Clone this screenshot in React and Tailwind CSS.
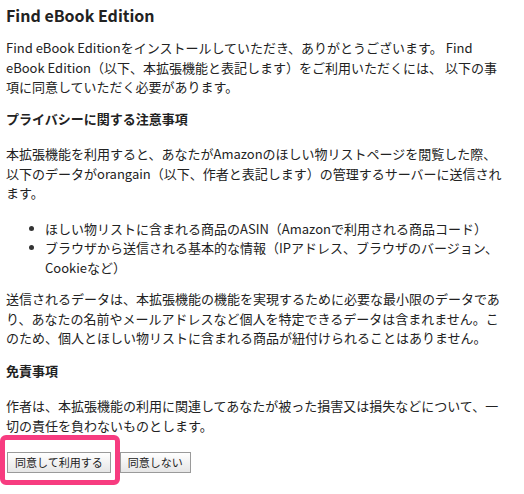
import React from 'react';

const Line = ({ children }) => <span className="block whitespace-nowrap">{children}</span>;

const Bullet = ({ children }) => (
  <li className="flex">
    <span className="w-[39px] shrink-0 flex items-center justify-end pr-[11px] h-[19.5px]">
      <span className="block w-[5px] h-[5px] rounded-full bg-[#333]" />
    </span>
    <span>{children}</span>
  </li>
);

const App = () => (
  <div className="w-[524px] h-[494px] bg-white px-[6px] pt-[5px] text-[#222] font-['Noto_Sans_CJK_JP',sans-serif] text-[13px] leading-[19.5px]">
    <h1 className="text-[16px] font-bold leading-[20px]">Find eBook Edition</h1>

    <p className="mt-[13px]">
      <Line>Find eBook Editionをインストールしていただき、ありがとうございます。 Find</Line>
      <Line>eBook Edition（以下、本拡張機能と表記します）をご利用いただくには、 以下の事</Line>
      <Line>項に同意していただく必要があります。</Line>
    </p>

    <h2 className="mt-[12px] font-bold">プライバシーに関する注意事項</h2>

    <p className="mt-[16px]">
      <Line>本拡張機能を利用すると、あなたがAmazonのほしい物リストページを閲覧した際、</Line>
      <Line>以下のデータがorangain（以下、作者と表記します）の管理するサーバーに送信され</Line>
      <Line>ます。</Line>
    </p>

    <ul className="mt-[16px]">
      <Bullet>
        <Line>ほしい物リストに含まれる商品のASIN（Amazonで利用される商品コード）</Line>
      </Bullet>
      <Bullet>
        <Line>ブラウザから送信される基本的な情報（IPアドレス、ブラウザのバージョン、</Line>
        <Line>Cookieなど）</Line>
      </Bullet>
    </ul>

    <p className="mt-[12px]">
      <Line>送信されるデータは、本拡張機能の機能を実現するために必要な最小限のデータであ</Line>
      <Line>り、あなたの名前やメールアドレスなど個人を特定できるデータは含まれません。こ</Line>
      <Line>のため、個人とほしい物リストに含まれる商品が紐付けられることはありません。</Line>
    </p>

    <h2 className="mt-[13.5px] font-bold">免責事項</h2>

    <p className="mt-[15.5px]">
      <Line>作者は、本拡張機能の利用に関連してあなたが被った損害又は損失などについて、一</Line>
      <Line>切の責任を負わないものとします。</Line>
    </p>

    <div className="relative mt-[17px] ml-[1px] flex gap-[9px]">
      <button className="h-[21px] px-[7px] border border-[#9a9a9a] bg-gradient-to-b from-[#ffffff] to-[#e6e6e6] text-[11px] leading-none text-[#222]">
        同意して利用する
      </button>
      <button className="h-[21px] px-[7px] border border-[#9a9a9a] bg-gradient-to-b from-[#ffffff] to-[#e6e6e6] text-[11px] leading-none text-[#222]">
        同意しない
      </button>
      <div className="absolute top-[-17px] left-[-7px] w-[120px] h-[50px] border-[5px] border-[#f73c80] rounded-[6px] pointer-events-none" />
    </div>
  </div>
);

export default App;
